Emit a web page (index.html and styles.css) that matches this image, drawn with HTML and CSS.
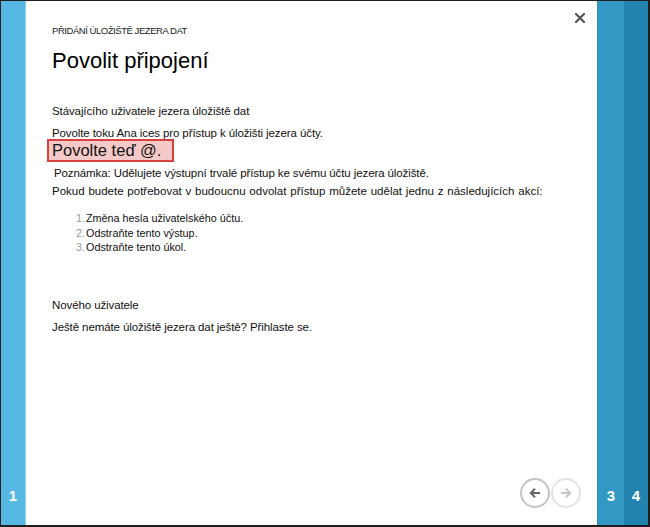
FILE: index.html
```html
<!DOCTYPE html>
<html lang="cs">
<head>
<meta charset="utf-8">
<title>Povolit připojení</title>
<link rel="stylesheet" href="styles.css">
</head>
<body>
<div class="frame">
  <div class="step step-1"><span class="num">1</span></div>
  <div class="main">
    <button class="close" aria-label="Zavřít">
      <svg width="10" height="10" viewBox="0 0 10 10"><path d="M1 1L9 9M9 1L1 9" stroke="#555" stroke-width="2.2" stroke-linecap="square"/></svg>
    </button>
    <div class="content">
      <div class="kicker">PŘIDÁNÍ ÚLOŽIŠTĚ JEZERA DAT</div>
      <h1 class="title">Povolit připojení</h1>
      <div class="section-head">Stávajícího uživatele jezera úložiště dat</div>
      <p class="line">Povolte toku Ana ices pro přístup k úložišti jezera účty.</p>
      <div class="highlight">Povolte teď @.</div>
      <p class="note">Poznámka: Udělujete výstupní trvalé přístup ke svému účtu jezera úložiště.</p>
      <p class="line wide">Pokud budete potřebovat v budoucnu odvolat přístup můžete udělat jednu z následujících akcí:</p>
      <ol class="steps">
        <li><span class="n">1.</span>Změna hesla uživatelského účtu.</li>
        <li><span class="n">2.</span>Odstraňte tento výstup.</li>
        <li><span class="n">3.</span>Odstraňte tento úkol.</li>
      </ol>
      <div class="section-head new">Nového uživatele</div>
      <p class="line">Ještě nemáte úložiště jezera dat ještě? Přihlaste se.</p>
    </div>
    <div class="nav">
      <button class="circle back" aria-label="Zpět">
        <svg width="12" height="12" viewBox="0 0 12 12"><path d="M11 6H2M6 1.8L1.8 6L6 10.2" fill="none" stroke="#666" stroke-width="2"/></svg>
      </button>
      <button class="circle fwd" aria-label="Další">
        <svg width="12" height="12" viewBox="0 0 12 12"><path d="M1 6H10M6 1.8L10.2 6L6 10.2" fill="none" stroke="#c8c8c8" stroke-width="2"/></svg>
      </button>
    </div>
  </div>
  <div class="step step-3"><span class="num">3</span></div>
  <div class="step step-4"><span class="num">4</span></div>
</div>
</body>
</html>
```
FILE: styles.css
```css
html, body {
  margin: 0;
  padding: 0;
  background: #1e1e1e;
}
body {
  width: 650px;
  height: 527px;
  overflow: hidden;
  font-family: "Segoe UI", "Liberation Sans", Arial, sans-serif;
  color: #111;
}
.frame {
  box-sizing: border-box;
  width: 650px;
  height: 527px;
  border-top: 1px solid #1e1e1e;
  border-left: 1px solid #1e1e1e;
  border-right: 2px solid #1e1e1e;
  border-bottom: 2px solid #1e1e1e;
  display: flex;
}
.step {
  display: flex;
  align-items: flex-end;
  justify-content: center;
  color: #fff;
  font-weight: bold;
  font-size: 15px;
}
.step .num {
  padding-bottom: 21px;
}
.step-1 {
  width: 24px;
  background: #56b7e2;
  border-right: 1px solid #8fd3f1;
}
.step-3 {
  width: 26px;
  background: #3399c4;
  border-left: 1px solid #2a8cbb;
}
.step-4 {
  width: 24px;
  background: #2283b0;
}
.main {
  flex: 1;
  background: #fff;
  position: relative;
  display: flex;
  flex-direction: column;
}
.close {
  position: absolute;
  top: 12px;
  right: 12px;
  border: 0;
  background: none;
  padding: 0;
  width: 10px;
  height: 10px;
  display: block;
}
.close svg { display: block; }
.content {
  padding: 24px 0 0 26px;
  flex: 1;
}
.kicker {
  font-size: 9.5px;
  line-height: 12px;
  color: #222;
  letter-spacing: -0.45px;
}
.title {
  margin: 10px 0 0;
  font-size: 22px;
  font-weight: normal;
  line-height: 28px;
  color: #000;
}
.section-head {
  margin-top: 28px;
  font-size: 11.5px;
  letter-spacing: -0.1px;
  line-height: 16px;
}
.line {
  margin: 6px 0 0;
  font-size: 11.5px;
  letter-spacing: -0.1px;
  line-height: 16px;
}
.line.wide {
  letter-spacing: 0;
  word-spacing: 0.6px;
}
.highlight {
  margin: -2px 0 0 -5px;
  box-sizing: border-box;
  width: 127px;
  height: 23px;
  border: 2px solid #d9413f;
  background: #f6c9c9;
  font-size: 16.5px;
  line-height: 19px;
  padding-left: 3px;
  color: #111;
}
.note {
  margin: 3px 0 0 2px;
  font-size: 11.5px;
  letter-spacing: -0.1px;
  line-height: 16px;
}
.note + .line {
  margin-top: 2px;
}
.steps {
  list-style: none;
  margin: 12px 0 0 24px;
  padding: 0;
  font-size: 10.8px;
  line-height: 14.5px;
}
.steps .n {
  color: #999;
  display: inline-block;
  width: 10px;
}
.section-head.new {
  margin-top: 42px;
}
.nav {
  position: absolute;
  right: 16px;
  bottom: 17px;
  display: flex;
  gap: 1px;
}
.circle {
  box-sizing: border-box;
  width: 30px;
  height: 30px;
  border-radius: 50%;
  background: #fff;
  padding: 0;
  display: flex;
  align-items: center;
  justify-content: center;
}
.circle.back { border: 2px solid #c4c4c4; }
.circle.fwd { border: 2px solid #e4e4e4; }
.circle svg { display: block; }
```
